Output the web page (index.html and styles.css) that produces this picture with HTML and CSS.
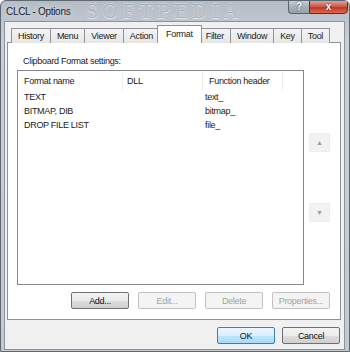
FILE: index.html
```html
<!DOCTYPE html>
<html lang="en">

<head>
    <meta charset="UTF-8">
    <title>CLCL - Options</title>
    <link rel="stylesheet" href="styles.css">
</head>

<body>
    <div class="window">
        <div class="titlebar">
            <span class="title">CLCL - Options</span>
            <span class="watermark">SOFTPEDIA</span>
            <div class="caption-buttons">
                <button class="cap-btn help">?</button>
                <button class="cap-btn close">x</button>
            </div>
        </div>

        <div class="client">
            <ul class="tabs">
                <li>History</li>
                <li>Menu</li>
                <li>Viewer</li>
                <li>Action</li>
                <li class="active">Format</li>
                <li>Filter</li>
                <li>Window</li>
                <li>Key</li>
                <li>Tool</li>
            </ul>

            <div class="panel">
                <p class="caption">Clipboard Format settings:</p>

                <div class="list-area">
                    <div class="listview">
                        <div class="lv-row lv-head">
                            <span class="col-name">Format name</span>
                            <span class="col-dll">DLL</span>
                            <span class="col-func">Function header</span>
                        </div>
                        <div class="lv-row">
                            <span class="col-name">TEXT</span>
                            <span class="col-dll"></span>
                            <span class="col-func">text_</span>
                        </div>
                        <div class="lv-row">
                            <span class="col-name">BITMAP, DIB</span>
                            <span class="col-dll"></span>
                            <span class="col-func">bitmap_</span>
                        </div>
                        <div class="lv-row">
                            <span class="col-name">DROP FILE LIST</span>
                            <span class="col-dll"></span>
                            <span class="col-func">file_</span>
                        </div>
                    </div>

                    <div class="move-buttons">
                        <button class="move-btn">&#9650;</button>
                        <button class="move-btn">&#9660;</button>
                    </div>
                </div>

                <div class="btn-row">
                    <button class="btn">Add...</button>
                    <button class="btn" disabled>Edit...</button>
                    <button class="btn" disabled>Delete</button>
                    <button class="btn" disabled>Properties...</button>
                </div>
            </div>

            <div class="dialog-buttons">
                <button class="btn default">OK</button>
                <button class="btn">Cancel</button>
            </div>
        </div>
    </div>
</body>

</html>
```

FILE: styles.css
```css
/* --- Base --- */
:root {
    --face: #f0f0f0;
    --text: #1a1a1a;
    --disabled: #a3a3a3;
    --panel-border: #8d9199;
    --list-border: #828790;
    --font: 'Liberation Sans', Arial, sans-serif;
}

* {
    box-sizing: border-box;
}

body {
    margin: 0;
    background: #ffffff;
    font-family: var(--font);
    font-size: 9px;
    letter-spacing: -0.3px;
    color: var(--text);
}

/* --- Window frame --- */
.window {
    width: 350px;
    height: 352px;
    display: flex;
    flex-direction: column;
    padding: 0 4px 3px 3px;
    border: 1px solid #5f6770;
    border-radius: 6px 6px 0 0;
    background: linear-gradient(to bottom, #b4bcc6, #c9cfd6 40px, #c3c9d0);
    overflow: hidden;
}

.titlebar {
    height: 20px;
    display: flex;
    align-items: center;
    flex-shrink: 0;
}

.title {
    font-size: 10px;
    color: #1b2330;
    padding-left: 2px;
    text-shadow: 0 0 6px rgba(255, 255, 255, 0.9);
}

.watermark {
    margin-left: 16px;
    font-family: 'Liberation Serif', serif;
    font-weight: bold;
    font-size: 21px;
    letter-spacing: 4px;
    line-height: 19px;
    color: rgba(130, 138, 148, 0.45);
    text-shadow: 0 1px 0 rgba(255, 255, 255, 0.55), 0 -1px 0 rgba(255, 255, 255, 0.3);
}

.caption-buttons {
    margin-left: auto;
    align-self: flex-start;
    display: flex;
    margin-top: -1px;
    margin-right: -3px;
}

.cap-btn {
    height: 14px;
    border: 1px solid #5a626c;
    font-family: var(--font);
    font-weight: bold;
    font-size: 10px;
    line-height: 10px;
    color: #ffffff;
    padding: 0;
}

.cap-btn.help {
    width: 21px;
    border-radius: 0 0 0 4px;
    border-right: none;
    background: linear-gradient(to bottom, #c6ccd4, #a6afb9 50%, #97a1ac);
    text-shadow: 0 0 2px #333;
}

.cap-btn.close {
    width: 39px;
    border-radius: 0 0 4px 0;
    border-color: #6a2a24;
    background: linear-gradient(to bottom, #e3a196, #cf5a48 45%, #c03a27 55%, #d46c55);
    text-shadow: 0 0 2px #400;
}

/* --- Client area --- */
.client {
    flex: 1;
    display: flex;
    flex-direction: column;
    background: var(--face);
    border: 1px solid #8a929b;
    padding: 4px 3px 5px 2px;
}

/* --- Tabs --- */
.tabs {
    list-style: none;
    margin: 0 0 0 4px;
    padding: 0;
    display: flex;
    align-items: flex-end;
    height: 17px;
    position: relative;
    z-index: 1;
    margin-bottom: -1px;
}

.tabs li {
    height: 15px;
    padding: 0 6px;
    line-height: 14px;
    border: 1px solid var(--panel-border);
    border-bottom: none;
    margin-right: -1px;
    background: linear-gradient(to bottom, #f4f4f4, #e6e6e6);
}

.tabs li.active {
    height: 18px;
    line-height: 16px;
    margin: 0 -2px 0 -2px;
    padding: 0 8px;
    background: #ffffff;
    position: relative;
    z-index: 2;
}

.tabs li.active + li {
    border-left: none;
}

/* --- Tab panel --- */
.panel {
    flex: 1;
    background: #ffffff;
    border: 1px solid var(--panel-border);
    display: flex;
    flex-direction: column;
    padding: 0 10px 10px 9px;
}

.caption {
    margin: 13px 0 3px 6px;
    line-height: 11px;
}

.list-area {
    display: flex;
    height: 215px;
}

.listview {
    width: 291px;
    height: 100%;
    border: 1px solid var(--list-border);
    padding-top: 1px;
}

.lv-row {
    display: flex;
    height: 14px;
    line-height: 14px;
}

.lv-row.lv-head {
    height: 18px;
    line-height: 18px;
}

.lv-head span {
    border-right: 1px solid #ececec;
}

.col-name {
    width: 105px;
    padding-left: 6px;
}

.col-dll {
    width: 80px;
    padding-left: 4px;
}

.col-func {
    width: 80px;
    padding-left: 2px;
}

.lv-head .col-func {
    padding-left: 6px;
}

.move-buttons {
    display: flex;
    flex-direction: column;
    justify-content: space-between;
    margin: 63px 0 63px 5px;
}

.move-btn {
    width: 21px;
    height: 19px;
    padding: 0;
    border: 1px solid #ededed;
    background: #f2f2f2;
    color: #9a9a9a;
    font-size: 7px;
    line-height: 10px;
}

/* --- Buttons --- */
.btn-row {
    display: flex;
    justify-content: flex-end;
    gap: 9px;
    margin-top: 7px;
}

.btn {
    width: 58px;
    height: 17px;
    padding: 0;
    font-family: var(--font);
    font-size: 9px;
    letter-spacing: -0.3px;
    color: #111111;
    border: 1px solid #707070;
    border-radius: 2px;
    background: linear-gradient(to bottom, #f3f3f3, #ebebeb 50%, #dddddd 51%, #cfcfcf);
}

.btn:disabled {
    color: var(--disabled);
    border-color: #c2c2c2;
    background: #f4f4f4;
}

.btn.default {
    border-color: #3c7fb1;
    background: linear-gradient(to bottom, #eaf6fd, #d9f0fc 50%, #bee6fd 51%, #a7d9f5);
}

.dialog-buttons {
    display: flex;
    justify-content: flex-end;
    gap: 7px;
    margin-top: 7px;
    padding-right: 1px;
}
```
